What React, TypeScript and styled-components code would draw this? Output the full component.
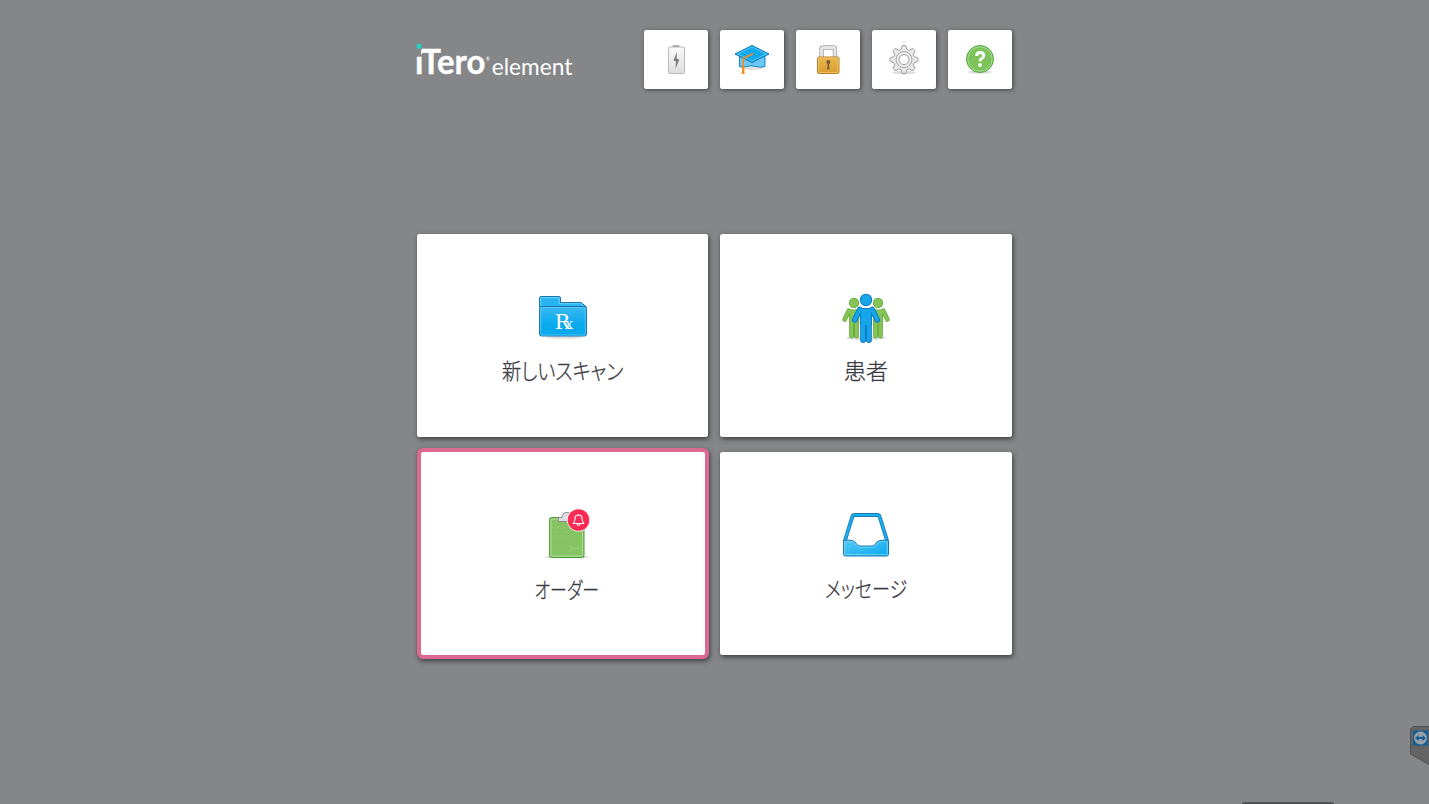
import styled, { createGlobalStyle } from "styled-components";

const BG = "#858688";

function Logo() {
  return (
    <STLogo width="160" height="42" viewBox="415 38 160 42">
      <g fill="#fff" fontFamily="Lato, 'Liberation Sans', sans-serif">
        <text y="74.2" fontSize="35" fontWeight="700" stroke="#fff" strokeWidth=".4">
          <tspan x="415" fontSize="33">i</tspan>
          <tspan x="421.3" textLength="64" lengthAdjust="spacingAndGlyphs">Tero</tspan>
        </text>
        <text x="485.7" y="60.500" fontSize="5">®</text>
        <text x="491.8" y="74.5" fontSize="23.5" textLength="80.500" lengthAdjust="spacingAndGlyphs">
          element
        </text>
      </g>
      <rect x="415" y="47" width="6" height="8.5" fill={BG} />
      <rect x="416.7" y="44" width="4.6" height="4.6" rx=".4" fill="#20d0c8" />
    </STLogo>
  );
}

function BatteryIcon() {
  return (
    <svg width="40" height="40" viewBox="0 0 40 40">
      <defs>
        <linearGradient id="battery" x2="0" y2="1">
          <stop stopColor="#fafafa" />
          <stop offset="1" stopColor="#dedede" />
        </linearGradient>
      </defs>
      <rect x="16.5" y="5.2" width="7" height="2" rx="1" fill="#999" />
      <rect x="12.500" y="7" width="16" height="26.5" rx="1.2" fill="url(#battery)" stroke="#b9b9b9" />
      <path d="M21 11.8 17.500 20.6 20 21.5 19.500 29 23.3 19.6 20.7 18.8Z" fill="#7c7c7c" />
    </svg>
  );
}

function CapIcon() {
  return (
    <svg width="40" height="40" viewBox="0 0 40 40">
      <ellipse cx="20" cy="27.5" rx="11" ry="2.8" fill="#e5e1e1" />
      <path d="M7.5 16.5v10q3 1.3 6 .2 5.500-2 12 .1 4 1 7.500-.3V16.500Z" fill="#6cc9f5" stroke="#1283c3" />
      <path d="M20 5.500 37 14 20 22.500 3 14Z" fill="#12a8ed" stroke="#0873b4" strokeLinejoin="round" />
      <path d="M20 7 34.500 14 20 21 5.500 14Z" fill="none" stroke="#65d2fa" strokeWidth=".8" />
      <path d="M20.500 14 11.500 18 11 27" fill="none" stroke="#f38b20" strokeWidth="1.800" strokeLinecap="round" />
      <path d="M10.500 25h1.500l.6 9H9.700Z" fill="#fb8b13" />
    </svg>
  );
}

function LockIcon() {
  return (
    <svg width="40" height="40" viewBox="0 0 40 40">
      <defs>
        <linearGradient id="lock" x2="0" y2="1">
          <stop stopColor="#e9b94d" />
          <stop offset="1" stopColor="#d89c30" />
        </linearGradient>
      </defs>
      <path d="M13.500 18V9.500Q13.500 7.500 15.500 7.500H25Q27 7.500 27 9.500V18" fill="none" stroke="#a4a4a4" strokeWidth="4.400" />
      <path d="M13.500 18V9.500Q13.500 7.500 15.500 7.500H25Q27 7.500 27 9.500V18" fill="none" stroke="#e6e6e8" strokeWidth="2.800" />
      <rect x="9.500" y="17" width="21.500" height="16.500" rx="1.500" fill="url(#lock)" stroke="#b77d20" />
      <rect x="10.500" y="18" width="19.500" height="14.500" rx=".8" fill="none" stroke="#f4ce78" strokeWidth=".7" />
      <circle cx="20.300" cy="22" r="2" fill="#785a36" />
      <path d="M19.500 23h1.600v4l1 2.300h-3.600l1-2.300Z" fill="#785a36" />
    </svg>
  );
}

// outline of the eight-tooth wheel
const gearPath =
  Array.from({ length: 96 }, (_, i) => {
    const a = (i / 96) * Math.PI * 2;
    const r = 12.3 + 1.9 * Math.tanh(2 * Math.cos(8 * a));
    return `${i ? "L" : "M"}${(20 + r * Math.cos(a)).toFixed(2)} ${(19.6 + r * Math.sin(a)).toFixed(2)}`;
  }).join("") + "Z";

function GearIcon() {
  return (
    <svg width="40" height="40" viewBox="0 0 40 40">
      <ellipse cx="20" cy="32.500" rx="12" ry="1.600" fill="#dedede" />
      <path d={gearPath} fill="#e8e8e9" stroke="#969698" strokeLinejoin="round" />
      <circle cx="20" cy="19.600" r="8" fill="#dcdcdd" stroke="#a0a0a1" strokeWidth=".9" />
      <circle cx="20" cy="19.600" r="6.500" fill="none" stroke="#f3f3f3" strokeWidth="1.300" />
      <circle cx="20" cy="19.600" r="5" fill="#fff" stroke="#979799" strokeWidth=".9" />
    </svg>
  );
}

function HelpIcon() {
  return (
    <svg width="40" height="40" viewBox="0 0 40 40">
      <ellipse cx="20" cy="32" rx="12" ry="1.600" fill="#dcdcdc" />
      <circle cx="20" cy="19" r="13.500" fill="#7cc45a" stroke="#52aa42" />
      <circle cx="20" cy="19" r="12.200" fill="none" stroke="#b1dc98" strokeWidth=".9" />
      <path d="M16.700 16v-.5q0-3 3.500-3t3.500 3q0 2-2 3-1.700.8-1.700 2.700" fill="none" stroke="#fff" strokeWidth="3" />
      <circle cx="20" cy="25" r="1.900" fill="#fff" />
    </svg>
  );
}

function FolderIcon() {
  return (
    <svg width="56" height="56" viewBox="0 0 56 56">
      <defs>
        <linearGradient id="folder" x2="0" y2="1">
          <stop stopColor="#3cbaf0" />
          <stop offset=".6" stopColor="#09a9ee" />
        </linearGradient>
      </defs>
      <ellipse cx="29" cy="48" rx="18" ry="1.800" fill="#e2dede" />
      <path d="M4.500 18V9Q4.500 7.500 6 7.500H24Q25.500 7.500 25.500 9V13.500H46L51.500 18Z" fill="#27b5f2" stroke="#1977ae" />
      <path d="M5.700 18V8.700H24.300V14.700H45.500L49 17.500" fill="none" stroke="#79d5fa" strokeWidth=".8" />
      <rect x="4.500" y="17.500" width="47" height="29.500" rx="2" fill="url(#folder)" stroke="#1977ae" />
      <rect x="5.700" y="18.500" width="44.600" height="27.500" rx="1" fill="none" stroke="#60ccf9" strokeWidth=".8" />
      <text x="20" y="40" fontFamily="'Liberation Serif', serif" fontSize="23.500" fill="#fff">
        R<tspan dx="-6" fontSize="17">x</tspan>
      </text>
    </svg>
  );
}

function Person({ color, line }: { color: string; line: string }) {
  return (
    <g strokeLinecap="round" fill="none">
      {[
        { tone: line, grow: 1.6 },
        { tone: color, grow: 0 },
      ].map(({ tone, grow }) => (
        <g key={tone} stroke={tone}>
          <circle cy="-17" r={5.4 + grow / 2} fill={tone} stroke="none" />
          <path d="M-6.200-7.500-11.300 3M6.200-7.500 11.300 3" strokeWidth={4 + grow} />
          <path d="M-2.900 6V23M2.900 6V23" strokeWidth={4.2 + grow} />
          <path
            d="M-4-7H4V7H-4Z"
            fill={tone}
            strokeWidth={2.4 + grow}
            strokeLinejoin="round"
          />
        </g>
      ))}
    </g>
  );
}

function PeopleIcon() {
  return (
    <svg width="56" height="56" viewBox="0 0 56 56">
      <ellipse cx="28" cy="49" rx="20" ry="2" fill="#dedede" />
      {[16, 40].map((x) => (
        <g key={x} transform={`translate(${x} 28) scale(.83)`}>
          <Person color="#86c45a" line="#5ba52d" />
        </g>
      ))}
      <g transform="translate(28 28)">
        <Person color="#17a5ea" line="#0873b8" />
      </g>
    </svg>
  );
}

function ClipboardIcon() {
  return (
    <svg width="56" height="56" viewBox="0 0 56 56">
      <ellipse cx="28" cy="49" rx="22" ry="1.500" fill="#d7d7d7" />
      <rect x="10.500" y="9.500" width="34.500" height="40" rx="2" fill="#86c463" stroke="#4ba039" />
      <rect x="11.900" y="11" width="31.700" height="37" rx="1" fill="none" stroke="#b4df9d" strokeWidth="1" />
      <path d="M15 20h11M15 24h5M15 28h13" stroke="#90cb70" />
      <path d="M30 38 35 40.500 30 43M35 40.500h6" stroke="#a0d280" fill="none" />
      <path d="M19.500 13.500V9.500H23Q23 4.500 28 4.500T33 9.500H37V13.500Z" fill="#dedee2" stroke="#8c8c91" />
      <circle cx="39.500" cy="12" r="11.500" fill="#fff" />
      <circle cx="39.500" cy="12" r="10.800" fill="#fb2b55" />
      <path
        d="M34.200 15.500Q36 13.500 36 10.500Q36 7 39.500 7T43 10.500Q43 13.500 44.800 15.500ZM38 15.700Q38.200 17.500 39.500 17.500T41 15.700M39.500 6v1"
        fill="none"
        stroke="#fff"
        strokeWidth="1.100"
        strokeLinejoin="round"
      />
    </svg>
  );
}

function InboxIcon() {
  return (
    <svg width="56" height="56" viewBox="0 0 56 56">
      <defs>
        <linearGradient id="tray" x2="1" y2="1">
          <stop stopColor="#55c8f4" />
          <stop offset="1" stopColor="#0baaf0" />
        </linearGradient>
      </defs>
      <path d="M6.800 34 14.400 9.600Q15 8 17 8H39Q41 8 41.600 9.600L49.200 34" fill="none" stroke="#1479b0" strokeWidth="3.800" />
      <path d="M6.800 34 14.400 9.600Q15 8 17 8H39Q41 8 41.600 9.600L49.200 34" fill="none" stroke="#1ab0f0" strokeWidth="2.200" />
      <path
        d="M5.500 34Q7 32.500 14 33.500Q17 34 18.500 37Q20 39 22 39H34Q36 39 37.500 37Q39 34 42 33.500Q49 32.500 50.500 34V47Q50.500 49 48.500 49H7.500Q5.500 49 5.500 47Z"
        fill="url(#tray)"
        stroke="#1479b0"
      />
      <path
        d="M6.700 47.700V35Q9 34 14 34.800Q16.500 35 18 38Q19.500 40.200 22 40.200H34Q36.500 40.200 38 38Q39.500 35 42 34.800Q47 34 49.300 35V47.700Z"
        fill="none"
        stroke="#83d9f9"
        strokeWidth=".8"
      />
    </svg>
  );
}

const tools = [
  { name: "battery", icon: <BatteryIcon /> },
  { name: "training", icon: <CapIcon /> },
  { name: "lock", icon: <LockIcon /> },
  { name: "settings", icon: <GearIcon /> },
  { name: "help", icon: <HelpIcon /> },
];

const menus = [
  { title: "新しいスキャン", icon: <FolderIcon />, stretch: 0.87 },
  { title: "患者", icon: <PeopleIcon />, stretch: 1 },
  { title: "オーダー", icon: <ClipboardIcon />, stretch: 0.77, active: true },
  { title: "メッセージ", icon: <InboxIcon />, stretch: 0.82 },
];

function App() {
  return (
    <STPage>
      <GlobalStyle />
      <STContainer>
        <STHeader>
          <Logo />
          <STTools>
            {tools.map((tool) => (
              <STToolButton key={tool.name}>{tool.icon}</STToolButton>
            ))}
          </STTools>
        </STHeader>
        <STGrid>
          {menus.map((menu) => (
            <STTile key={menu.title} $active={menu.active}>
              {menu.icon}
              <STLabel $stretch={menu.stretch}>{menu.title}</STLabel>
            </STTile>
          ))}
        </STGrid>
      </STContainer>
      <STRemote>
        <svg width="19" height="40" viewBox="0 0 19 40">
          <path d="M0 3 3 .5H19V39L0 28Z" fill="#646464" />
          <path d="M19 .5H3L.5 3V28L19 38.500" fill="none" stroke="#505153" />
          <rect x="3" y="4.500" width="15" height="15" fill="#135e94" />
          <circle cx="10.500" cy="12" r="6.500" fill="#999fa4" />
          <path d="M5 12 8.500 9v2h4V9L16 12 12.500 15V13h-4v2Z" fill="#135e94" />
        </svg>
      </STRemote>
      <STBottomBar />
    </STPage>
  );
}

const GlobalStyle = createGlobalStyle`
  body {
    margin: 0;
    background: ${BG};
    overflow: hidden;
  }
`;

const STPage = styled.div`
  position: relative;
  box-sizing: border-box;
  height: 804px;
  padding-top: 30px;
  background: ${BG};
  overflow: hidden;
`;

const STContainer = styled.div`
  width: 595px;
  margin: 0 auto;
`;

const STHeader = styled.div`
  display: flex;
  justify-content: space-between;
  height: 59px;
`;

const STLogo = styled.svg`
  margin: 8px 0 0 -2px;
`;

const STTools = styled.div`
  display: flex;
  gap: 12px;
`;

const STToolButton = styled.button`
  display: flex;
  align-items: center;
  justify-content: center;
  width: 64px;
  height: 59px;
  padding: 0;
  border: 0;
  border-radius: 2.5px;
  background: #fff;
  box-shadow: 1px 1px 4px rgba(0, 0, 0, 0.5);
`;

const STGrid = styled.div`
  display: grid;
  grid-template-columns: 291px 292px;
  grid-auto-rows: 203px;
  gap: 15px 12px;
  margin-top: 145px;
`;

const STTile = styled.button<{ $active?: boolean }>`
  display: flex;
  flex-direction: column;
  align-items: center;
  box-sizing: border-box;
  margin: ${(props) => (props.$active ? "-4px -1px -4px 0" : "0")};
  border: ${(props) => (props.$active ? "4px solid #dc6990" : "0")};
  padding: ${(props) => (props.$active ? "56px 0 0 7px" : "55px 0 0")};
  border-radius: ${(props) => (props.$active ? "6px" : "2.5px")};
  background: #fff;
  box-shadow: 1px 2px 5px rgba(0, 0, 0, 0.55);
`;

const STLabel = styled.span<{ $stretch: number }>`
  margin-top: 8px;
  color: #3b3b43;
  font-family: "Noto Sans CJK JP", sans-serif;
  font-size: 22px;
  font-weight: 300;
  line-height: 32px;
  font-feature-settings: "palt";
  white-space: nowrap;
  -webkit-text-stroke: 0.3px #3b3b43;
  transform: scaleX(${(props) => props.$stretch});
`;

const STRemote = styled.div`
  position: absolute;
  right: 0;
  top: 726px;
  height: 40px;
`;

const STBottomBar = styled.div`
  position: absolute;
  left: 1242px;
  bottom: 0;
  width: 92px;
  height: 2px;
  border-radius: 2px 2px 0 0;
  background: #515254;
`;

export default App;
